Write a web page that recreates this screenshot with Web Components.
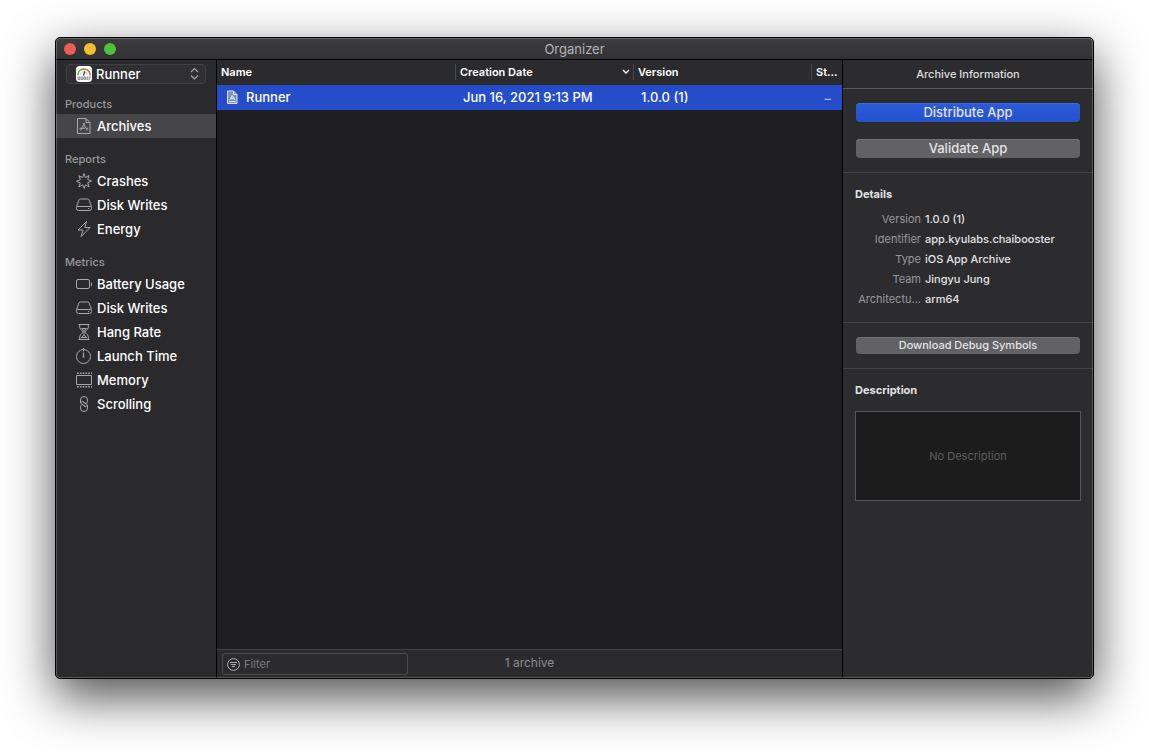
<!DOCTYPE html>
<html lang="en">
<head>
<meta charset="utf-8">
<meta name="viewport" content="width=device-width, initial-scale=1">
<title>Organizer</title>
<style>
  html { background: #fff; }
  body {
    margin: 0;
    box-sizing: border-box;
    min-height: 100vh;
    padding: 37px 55px 73px;
    display: flex;
    color: #fff;
    font: 500 13px/20px Inter, "Noto Sans", sans-serif;
  }
</style>
</head>
<body>
<organizer-window heading="Organizer">
  <product-picker slot="sidebar"></product-picker>
  <nav-group slot="sidebar" heading="Products">
    <nav-item icon="archive" current>Archives</nav-item>
  </nav-group>
  <nav-group slot="sidebar" heading="Reports">
    <nav-item icon="crash">Crashes</nav-item>
    <nav-item icon="disk">Disk Writes</nav-item>
    <nav-item icon="energy">Energy</nav-item>
  </nav-group>
  <nav-group slot="sidebar" heading="Metrics">
    <nav-item icon="battery">Battery Usage</nav-item>
    <nav-item icon="disk">Disk Writes</nav-item>
    <nav-item icon="hang">Hang Rate</nav-item>
    <nav-item icon="launch">Launch Time</nav-item>
    <nav-item icon="memory">Memory</nav-item>
    <nav-item icon="scroll">Scrolling</nav-item>
  </nav-group>

  <archive-table slot="main"></archive-table>
  <filter-bar slot="main">1 archive</filter-bar>

  <inspector-header slot="inspector">Archive Information</inspector-header>
  <inspector-section slot="inspector">
    <push-button kind="primary">Distribute App</push-button>
    <push-button>Validate App</push-button>
  </inspector-section>
  <inspector-section slot="inspector" heading="Details">
    <archive-details></archive-details>
  </inspector-section>
  <inspector-section slot="inspector">
    <push-button kind="small">Download Debug Symbols</push-button>
  </inspector-section>
  <inspector-section slot="inspector" heading="Description">
    <description-box></description-box>
  </inspector-section>
</organizer-window>

<script>
const icons = {
  archive: '<path d="M1.500.500h8.500l4 4v11h-12.500z M10 .500v4h4"/><path d="M8.700 5L4.500 12.500M7 5L11.300 12.500M3.500 10.300h5.500M10.300 10.300h2"/>',
  crash: '<path d="M8 .600l1.300 4L13 2.500l-1.300 4L15.600 8l-3.900 1.700 1.500 4.100-3.800-2L8.200 15.400 6.600 11.800 2.800 13.900l1.500-4L.500 8.300l3.900-1.700L2.800 2.700l3.800 1.900z"/>',
  disk: '<path d="M4.200 2h7.600q1 0 1.300 1l2.300 6.500q.1.300.1.700v1.300q0 2-2 2h-11q-2 0-2-2v-1.300q0-.400.1-.7l2.300-6.500q.400-1 1.300-1z M1 9.500h14M12 11.600h1.300"/>',
  energy: '<path d="M10.500.500L2 9h5l-2 6.700L14 6.500H8.800z"/>',
  battery: '<rect x=".5" y="3.500" width="13" height="9" rx="1.500"/><path d="M15.500 6.500v3.500"/>',
  hang: '<path d="M2.500.500h11M2.500 15.500h11M3.700 1v2.500q0 1.500 3.500 4.500-3.500 3-3.500 4.500V15M12.300 1v2.500q0 1.500-3.500 4.500 3.500 3 3.500 4.500V15M5.500 4.500h5L8 6.800zM8 7v4M5.200 13.500L8 11.200l2.800 2.300z"/>',
  launch: '<path d="M7.500 0v3.500"/><circle cx="7.500" cy="8.500" r="7"/><path d="M7.500 4.500v4.500M6.500 9h2" stroke-width="1.200"/>',
  memory: '<rect x=".5" y="3.500" width="15" height="9"/><path d="M1 1.200h15M1 14.800h15" stroke-width="1.600" stroke-dasharray="1.600 1.200"/>',
  scroll: '<path d="M4.500 7V4q0-3.500 3.500-3.500T11.500 4v1.800q0 .8-1.500 2L6.500 5 4.500 7l5 3.500M11.500 9v3q0 3.500-3.500 3.500T4.500 12v-1.500q0-1 1.500-2.200L9.500 11l2-2L7 6"/>'
};

function define(name, template, setup) {
  const tpl = document.createElement('template');
  tpl.innerHTML = template;
  customElements.define(name, class extends HTMLElement {
    connectedCallback() {
      if (this.shadowRoot) return;
      this.attachShadow({ mode: 'open' }).append(tpl.content.cloneNode(true));
      if (setup) setup(this, this.shadowRoot);
    }
  });
}

define('organizer-window', `
<style>
  :host {
    flex: 1; min-width: 0; box-sizing: border-box; position: relative;
    display: flex; flex-direction: column;
    border: 1px solid #000; border-radius: 5px; background: #000;
    box-shadow: 0 18px 50px rgba(0,0,0,.7);
  }
  :host::after {
    content: ""; position: absolute; inset: 0; pointer-events: none;
    border: 1px solid rgba(255,255,255,.22); border-radius: 4px;
  }
  header {
    display: grid; grid-template-columns: 1fr auto 1fr; align-items: center;
    height: 21px; padding: 0 8px; border-bottom: 1px solid #000;
    border-radius: 4px 4px 0 0;
    background: linear-gradient(#3c3c3e, #323234);
  }
  .lights { display: flex; gap: 8px; }
  .lights button { width: 12px; height: 12px; padding: 0; border: 0; border-radius: 50%; background: #ee5c54; }
  .lights button:nth-child(2) { background: #f5bd2f; }
  .lights button:nth-child(3) { background: #50c03a; }
  h1 { margin: 0; font-size: 13px; font-weight: 400; color: #b4b4b6; }
  .body { flex: 1; display: grid; grid-template-columns: 160px minmax(0,1fr) 250px; column-gap: 1px; }
  nav { background: #2a2a2c; border-radius: 0 0 0 4px; padding-top: 4px; }
  main { background: #1e1e20; display: flex; flex-direction: column; }
  aside { background: #2c2c2e; border-radius: 0 0 4px 0; }
</style>
<header>
  <div class="lights"><button aria-label="Close"></button><button aria-label="Minimize"></button><button aria-label="Zoom"></button></div>
  <h1></h1>
</header>
<div class="body">
  <nav><slot name="sidebar"></slot></nav>
  <main><slot name="main"></slot></main>
  <aside><slot name="inspector"></slot></aside>
</div>`, (el, root) => { root.querySelector('h1').textContent = el.getAttribute('heading'); });

define('product-picker', `
<style>
  :host { display: block; position: relative; margin: 0 10px; }
  select {
    display: block; width: 100%; height: 20px; padding: 0 24px 0 29px;
    appearance: none; border: 1px solid #414143; border-radius: 4px;
    background: #303032; color: #fff; font: inherit; line-height: 18px;
  }
  svg { position: absolute; top: 2px; pointer-events: none; }
  .app { left: 10px; }
  .arrows { right: 7px; }
</style>
<select aria-label="Product"><option>Runner</option></select>
<svg class="app" width="16" height="16" viewBox="0 0 16 16" fill="none">
  <rect width="16" height="16" rx="3.500" fill="#fff"/>
  <path d="M2 9.500A6 6 0 0 1 5 3.700" stroke="#67a95b" stroke-width="1.500"/>
  <path d="M5 3.700A6 6 0 0 1 10.500 3.500" stroke="#a08a4a" stroke-width="1.500"/>
  <path d="M10.500 3.500A6 6 0 0 1 14 9.500" stroke="#d56654" stroke-width="1.500"/>
  <path d="M4.500 9A3.500 3.500 0 0 1 11.500 9" stroke="#bbb" stroke-width=".8"/>
  <path d="M7.500 9.500L8.800 5.500" stroke="#333" stroke-width="1.200"/>
  <g stroke="#777" stroke-width=".8">
    <rect x="2" y="11" width="1.800" height="2.500"/><rect x="5" y="11" width="1.800" height="2.500"/><rect x="8" y="11" width="1.500" height="2.500"/>
    <path d="M12.300 11h-1.500v1.200h1.300v1.300h-1.500M12.800 11h2M13.700 11v3"/>
  </g>
</svg>
<svg class="arrows" width="9" height="16" viewBox="0 0 9 16" fill="none" stroke="#a4a4a6" stroke-width="1.200">
  <path d="M1 6L4.500 2.500 8 6M1 9.500L4.500 13 8 9.500"/>
</svg>`);

define('nav-group', `
<style>
  :host { display: block; padding-top: 11px; }
  :host([heading="Products"]) { padding-top: 10px; }
  h2 { margin: 0; padding-left: 9px; font-size: 11px; font-weight: 500; color: #98989a; }
</style>
<section><h2></h2><slot></slot></section>`, (el, root) => { root.querySelector('h2').textContent = el.getAttribute('heading'); });

define('nav-item', `
<style>
  :host { display: block; }
  a { display: flex; align-items: center; gap: 5px; height: 24px; padding-left: 20px; color: #fff; text-decoration: none; }
  :host([current]) a { background: #464648; }
  svg { flex: none; }
</style>
<a href="#"><svg width="16" height="16" viewBox="0 0 16 16" fill="none" stroke="#a8a8aa" stroke-linejoin="round"></svg><slot></slot></a>`,
(el, root) => {
  root.querySelector('svg').innerHTML = icons[el.getAttribute('icon')];
  if (el.hasAttribute('current')) root.querySelector('a').setAttribute('aria-current', 'page');
});

define('archive-table', `
<style>
  :host { display: block; flex: 1; }
  table { width: 100%; table-layout: fixed; border-collapse: collapse; }
  .date, .version { width: 178px; }
  .status { width: 31px; }
  th { height: 21px; padding: 4px 0 0; vertical-align: top; text-align: left; font-size: 11px; font-weight: 600; background: #2b2b2e; }
  th span { display: flex; align-items: center; justify-content: space-between; height: 16px; padding: 0 3px 0 4px; border-left: 1px solid #48484a; }
  th:first-child span { border-left: 0; }
  td { height: 25px; padding: 0 0 1px 8px; box-sizing: border-box; background: #254dca; white-space: nowrap; }
  .name { display: flex; align-items: center; gap: 7px; }
  td:last-child { padding: 0 11px 0 0; text-align: right; color: #a8b8ea; }
</style>
<table>
  <colgroup><col><col class="date"><col class="version"><col class="status"></colgroup>
  <thead><tr>
    <th scope="col"><span>Name</span></th>
    <th scope="col" aria-sort="descending"><span>Creation Date
      <svg width="8" height="6" viewBox="0 0 8 6" fill="none" stroke="#fff" stroke-width="1.400"><path d="M1 1l3 3 3-3"/></svg></span></th>
    <th scope="col"><span>Version</span></th>
    <th scope="col"><span>St...</span></th>
  </tr></thead>
  <tbody><tr>
    <td><div class="name"><svg width="14" height="14" viewBox="0 0 14 14" fill="none">
      <path d="M2.500 1h6l3.500 3.500V13.500h-9.500z" fill="#7d93bd" stroke="#dbe3f0"/>
      <path d="M8.500 1v3.500H12" stroke="#dbe3f0"/>
      <path d="M5 9.500L7.200 5.500l2.300 4M5 8.500h4.500" stroke="#e8eef6"/>
      <path d="M4 11.500h6.500" stroke="#dbe3f0"/></svg>Runner</div></td>
    <td>Jun 16, 2021 9:13 PM</td>
    <td>1.0.0 (1)</td>
    <td>–</td>
  </tr></tbody>
</table>`);

define('filter-bar', `
<style>
  :host { display: grid; grid-template-columns: 1fr auto 1fr; align-items: center; height: 28px; padding: 0 5px; border-top: 1px solid #434345; background: #2b2b2d; color: #8c8c8e; font-size: 12px; font-weight: 400; }
  label { display: flex; align-items: center; gap: 4px; box-sizing: border-box; width: 186px; height: 22px; padding: 0 4px; border: 1px solid #4b4b4d; border-radius: 3px; }
  svg { flex: none; }
  input { flex: 1; min-width: 0; padding: 0; border: 0; outline: 0; background: none; color: #fff; font: inherit; font-size: 11px; }
  input::placeholder { color: #7c7c7e; opacity: 1; }
  .count { padding-bottom: 2px; }
</style>
<label><svg width="13" height="13" viewBox="0 0 13 13" fill="none" stroke="#b0b0b2"><circle cx="6.500" cy="6.500" r="5.900"/><path d="M3 4.500h7M4 6.500h5M5 8.500h3"/></svg>
<input type="text" placeholder="Filter" aria-label="Filter"></label>
<span class="count"><slot></slot></span>`);

define('inspector-header', `
<style>
  :host { display: block; border-bottom: 1px solid #5a5a5c; text-align: center; font-size: 11px; line-height: 28px; color: #dededf; }
</style>
<slot></slot>`);

define('inspector-section', `
<style>
  :host { display: block; padding: 14px 12px 13px; border-bottom: 1px solid #434345; }
  :host([heading]) { padding-top: 11px; }
  :host(:last-of-type) { border-bottom: 0; }
  h2 { margin: 0; font-size: 11px; font-weight: 700; color: #e2e2e3; }
  h2:empty { display: none; }
  .content { display: flex; flex-direction: column; gap: 16px; }
</style>
<section><h2></h2><div class="content"><slot></slot></div></section>`, (el, root) => { root.querySelector('h2').textContent = el.getAttribute('heading') || ''; });

define('push-button', `
<style>
  :host { display: block; padding: 0 1px 1px; }
  button { display: block; width: 100%; height: 19px; padding: 0 0 1px; border: 0; border-radius: 4px; background: #626264; box-shadow: inset 0 1px #727274; color: #e4e4e5; font: inherit; line-height: 18px; }
  :host([kind="primary"]) button { background: linear-gradient(#2b5cdc, #2450cb); box-shadow: inset 0 1px #3b69e4; }
  :host([kind="small"]) button { height: 17px; font-size: 11px; line-height: 16px; }
</style>
<button type="button"><slot></slot></button>`);

define('archive-details', `
<style>
  :host { display: block; padding-top: 5px; font-size: 11px; }
  dl { display: grid; grid-template-columns: 66px 1fr; column-gap: 4px; margin: 0; }
  dt { text-align: right; color: #98989a; font-weight: 400; }
  dd { margin: 0; color: #e2e2e3; white-space: nowrap; }
</style>
<dl>
  <dt>Version</dt><dd>1.0.0 (1)</dd>
  <dt>Identifier</dt><dd>app.kyulabs.chaibooster</dd>
  <dt>Type</dt><dd>iOS App Archive</dd>
  <dt>Team</dt><dd>Jingyu Jung</dd>
  <dt>Architectu...</dt><dd>arm64</dd>
</dl>`);

define('description-box', `
<style>
  :host { display: block; padding-top: 11px; }
  textarea { display: block; box-sizing: border-box; width: 100%; height: 90px; padding: 34px 8px; border: 1px solid #565658; border-radius: 0; outline: 0; resize: none; overflow: hidden; background: #1c1c1c; color: #e2e2e3; font: inherit; font-size: 11px; font-weight: 400; text-align: center; }
  textarea::placeholder { color: #5c5c5e; opacity: 1; }
</style>
<textarea aria-label="Description" placeholder="No Description"></textarea>`);
</script>
</body>
</html>
